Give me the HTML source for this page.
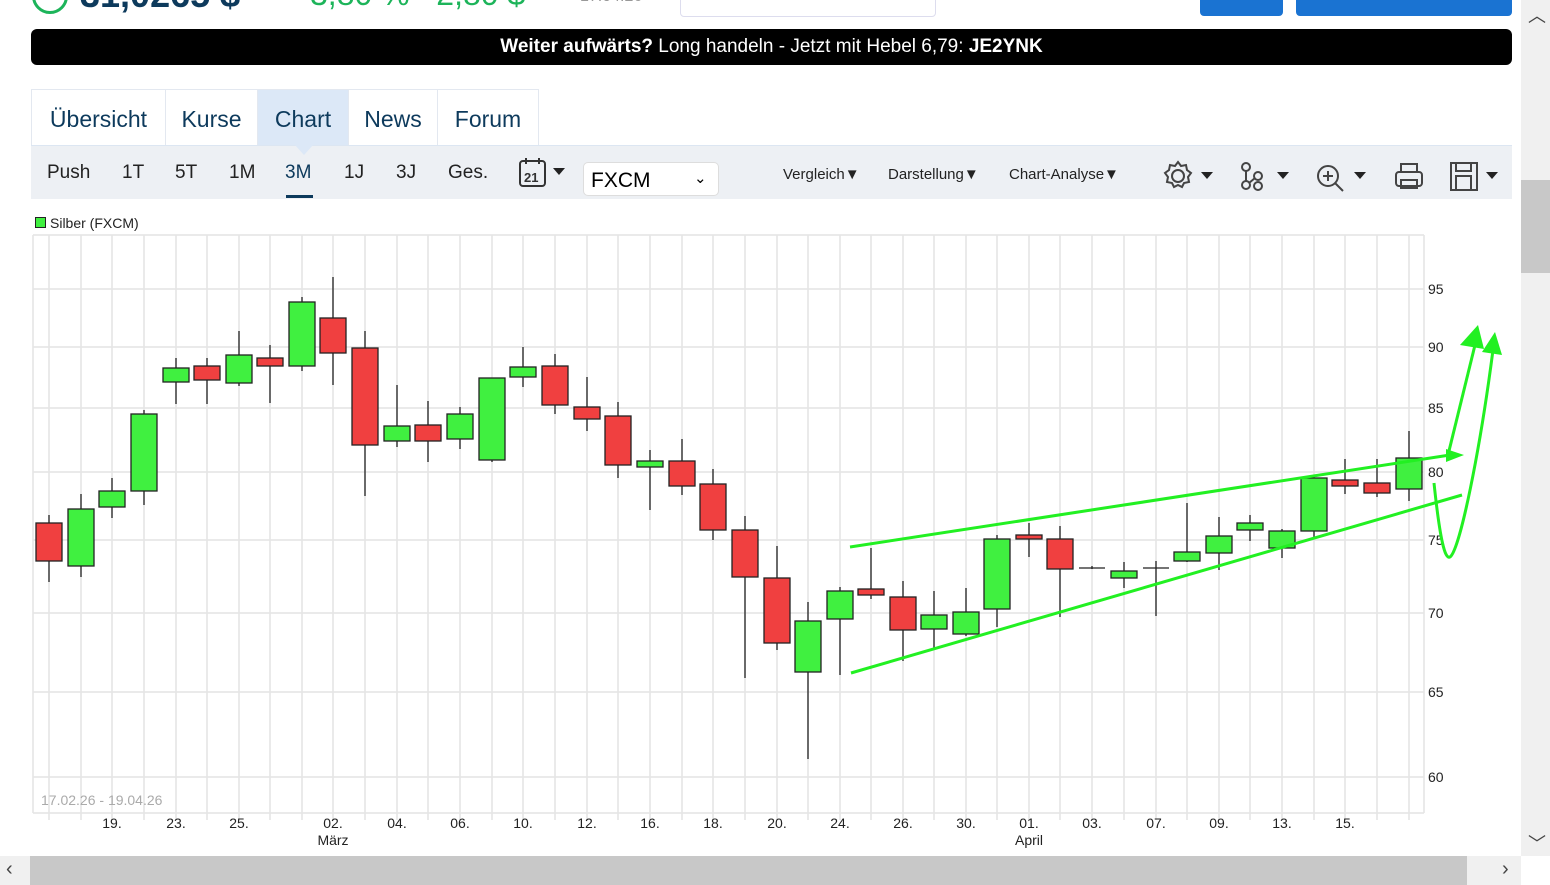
<!DOCTYPE html>
<html><head><meta charset="utf-8"><style>
body{margin:0;width:1550px;height:885px;overflow:hidden;background:#fff;font-family:"Liberation Sans",sans-serif;position:relative}
.a{position:absolute}
.tab{position:absolute;top:89px;height:56px;border:1px solid #e3e8f0;border-bottom:none;font-size:23px;color:#0d3a5c;line-height:58px;text-align:center;box-sizing:border-box}
.tb{position:absolute;top:162px;font-size:19px;color:#222}
.dd{position:absolute;top:166px;font-size:15px;color:#222}
</style></head><body>
<div class="a" style="left:32px;top:-22px;width:30px;height:30px;border:3px solid #1db45a;border-radius:50%"></div>
<div class="a" style="left:80px;top:-26px;font-size:36px;font-weight:bold;color:#0d3a5c">31,0265 $</div>
<div class="a" style="left:310px;top:-24px;font-size:32px;color:#1db45a">3,80 %&nbsp;&nbsp; 2,80 $</div>
<div class="a" style="left:580px;top:-12px;font-size:16px;color:#999">17.04.26</div>
<div class="a" style="left:680px;top:-5px;width:254px;height:20px;border:1px solid #dde;border-radius:4px"></div>
<div class="a" style="left:1200px;top:-5px;width:83px;height:21px;background:#1a73d2;border-radius:4px"></div>
<div class="a" style="left:1296px;top:-5px;width:216px;height:21px;background:#1a73d2;border-radius:4px"></div>
<div class="a" style="left:31px;top:29px;width:1481px;height:36px;background:#000;border-radius:6px;color:#fff;font-size:19px;line-height:36px;text-align:center"><b>Weiter aufwärts?</b> Long handeln - Jetzt mit Hebel 6,79: <b>JE2YNK</b></div>
<div class="tab" style="left:31px;width:135px">Übersicht</div>
<div class="tab" style="left:165px;width:93px">Kurse</div>
<div class="tab" style="left:257px;width:92px;background:#dce8f7">Chart</div>
<div class="tab" style="left:348px;width:90px">News</div>
<div class="tab" style="left:437px;width:102px">Forum</div>
<div class="a" style="left:31px;top:145px;width:1481px;height:53px;background:#edf0f4;border-top:1px solid #dce6f2"></div>
<div class="a" style="left:295px;top:145px;width:0;height:0;border-left:9px solid transparent;border-right:9px solid transparent;border-top:10px solid #dce8f7"></div>
<div class="tb" style="left:47px">Push</div><div class="tb" style="left:122px">1T</div><div class="tb" style="left:175px">5T</div><div class="tb" style="left:229px">1M</div><div class="tb" style="left:285px;color:#0d3a5c">3M</div><div class="tb" style="left:344px">1J</div><div class="tb" style="left:396px">3J</div><div class="tb" style="left:448px">Ges.</div>
<div class="a" style="left:286px;top:195px;width:27px;height:3px;background:#0d3a5c"></div>
<svg class="a" style="left:517px;top:157px" width="54" height="32"><rect x="3" y="4" width="25" height="25" rx="3" fill="none" stroke="#333" stroke-width="2"/><line x1="9" y1="1" x2="9" y2="7" stroke="#333" stroke-width="2"/><line x1="22" y1="1" x2="22" y2="7" stroke="#333" stroke-width="2"/><text x="7" y="25" font-size="13" font-weight="bold" fill="#333" font-family="Liberation Sans">21</text><path d="M36 11h12l-6 7z" fill="#222"/></svg>
<div class="a" style="left:583px;top:162px;width:136px;height:34px;background:#fff;border:1px solid #ddd;border-radius:5px;box-sizing:border-box;font-size:21px;line-height:36px;padding-left:7px">FXCM<span style="position:absolute;left:110px;top:-2px;font-size:15px">⌄</span></div>
<div class="dd" style="left:783px">Vergleich▼</div><div class="dd" style="left:888px">Darstellung▼</div><div class="dd" style="left:1009px">Chart-Analyse▼</div>
<svg class="a" style="left:1160px;top:158px" width="352" height="36" fill="none" stroke="#444" stroke-width="2">
<circle cx="18" cy="18" r="6"/><path d="M18 4l3 4 5-1 1 5 4 3-3 4 1 5-5 1-2 4-4-2-4 2-2-4-5-1 1-5-3-4 4-3 1-5 5 1z"/>
<path d="M41 14h12l-6 7z" fill="#222" stroke="none"/>
<circle cx="86" cy="9" r="4"/><circle cx="98" cy="18" r="4"/><circle cx="86" cy="27" r="4"/><circle cx="98" cy="28" r="4"/><path d="M86 13v10M89 25l6-5"/>
<path d="M117 14h12l-6 7z" fill="#222" stroke="none"/>
<circle cx="168" cy="18" r="10"/><path d="M175 25l8 8M163 18h10M168 13v10"/>
<path d="M194 14h12l-6 7z" fill="#222" stroke="none"/>
<rect x="236" y="14" width="26" height="14" rx="3"/><rect x="241" y="6" width="16" height="8"/><rect x="241" y="22" width="16" height="8"/>
<rect x="291" y="5" width="26" height="27"/><rect x="296" y="5" width="15" height="8"/><rect x="296" y="18" width="15" height="14"/>
<path d="M326 14h12l-6 7z" fill="#222" stroke="none"/>
</svg>
<div class="a" style="left:35px;top:217px;width:9px;height:9px;background:#40f040;border:1px solid #222"></div>
<div class="a" style="left:50px;top:215px;font-size:14px;color:#222">Silber (FXCM)</div>
<svg class="a" style="left:0;top:0" width="1520" height="856" font-family="Liberation Sans" font-size="14">
<g stroke="#e4e4e4" stroke-width="1.5">
<line x1="33" y1="235" x2="1424" y2="235"/><line x1="33" y1="289" x2="1424" y2="289"/><line x1="33" y1="347" x2="1424" y2="347"/><line x1="33" y1="408" x2="1424" y2="408"/><line x1="33" y1="472" x2="1424" y2="472"/><line x1="33" y1="540" x2="1424" y2="540"/><line x1="33" y1="613" x2="1424" y2="613"/><line x1="33" y1="692" x2="1424" y2="692"/><line x1="33" y1="777" x2="1424" y2="777"/><line x1="33" y1="813" x2="1424" y2="813"/>
<line x1="33" y1="235" x2="33" y2="813"/><line x1="1424" y1="235" x2="1424" y2="813"/>
<path d="M49 235V820M81 235V820M112 235V820M144 235V820M176 235V820M207 235V820M239 235V820M270 235V820M302 235V820M333 235V820M365 235V820M397 235V820M428 235V820M460 235V820M492 235V820M523 235V820M555 235V820M587 235V820M618 235V820M650 235V820M682 235V820M713 235V820M745 235V820M777 235V820M808 235V820M840 235V820M871 235V820M903 235V820M934 235V820M966 235V820M997 235V820M1029 235V820M1060 235V820M1092 235V820M1124 235V820M1156 235V820M1187 235V820M1219 235V820M1250 235V820M1282 235V820M1314 235V820M1345 235V820M1377 235V820M1409 235V820"/>
</g>
<g fill="#222"><text x="1428" y="294">95</text><text x="1428" y="352">90</text><text x="1428" y="413">85</text><text x="1428" y="477">80</text><text x="1428" y="545">75</text><text x="1428" y="618">70</text><text x="1428" y="697">65</text><text x="1428" y="782">60</text></g>
<text x="41" y="805" fill="#aaa">17.02.26 - 19.04.26</text>
<g fill="#222" text-anchor="middle"><text x="112" y="828">19.</text><text x="176" y="828">23.</text><text x="239" y="828">25.</text><text x="333" y="828">02.</text><text x="333" y="845">März</text><text x="397" y="828">04.</text><text x="460" y="828">06.</text><text x="523" y="828">10.</text><text x="587" y="828">12.</text><text x="650" y="828">16.</text><text x="713" y="828">18.</text><text x="777" y="828">20.</text><text x="840" y="828">24.</text><text x="903" y="828">26.</text><text x="966" y="828">30.</text><text x="1029" y="828">01.</text><text x="1029" y="845">April</text><text x="1092" y="828">03.</text><text x="1156" y="828">07.</text><text x="1219" y="828">09.</text><text x="1282" y="828">13.</text><text x="1345" y="828">15.</text></g>
<g stroke="#222" stroke-width="1.3">
<path d="M49 515V582M81 494V577M112 478V518M144 410V505M176 358V404M207 358V404M239 331V386M270 345V403M302 297V371M333 277V385M365 331V496M397 385V447M428 401V462M460 407V449M492 378V462M523 347V387M555 354V414M587 377V431M618 402V478M650 450V510M682 439V495M713 469V540M745 516V678M777 546V650M808 602V759M840 587V675M871 548V599M903 581V661M934 591V650M966 588V636M997 535V627M1029 523V557M1060 526V617M1092 566V569M1124 562V588M1156 561V616M1187 503V562M1219 517V570M1250 515V541M1282 529V558M1314 475V537M1345 459V494M1377 459V497M1409 431V501M1079 568H1105M1143 568H1169"/>
</g>
<g stroke="#222" stroke-width="1.3" fill="#40f040">
<rect x="68" y="509" width="26" height="57"/><rect x="99" y="491" width="26" height="16"/><rect x="131" y="414" width="26" height="77"/><rect x="163" y="368" width="26" height="14"/><rect x="226" y="355" width="26" height="28"/><rect x="289" y="302" width="26" height="64"/><rect x="384" y="426" width="26" height="15"/><rect x="447" y="414" width="26" height="25"/><rect x="479" y="378" width="26" height="82"/><rect x="510" y="367" width="26" height="10"/><rect x="637" y="461" width="26" height="6"/><rect x="795" y="621" width="26" height="51"/><rect x="827" y="591" width="26" height="28"/><rect x="921" y="615" width="26" height="14"/><rect x="953" y="612" width="26" height="22"/><rect x="984" y="539" width="26" height="70"/><rect x="1111" y="571" width="26" height="7"/><rect x="1174" y="552" width="26" height="9"/><rect x="1206" y="536" width="26" height="17"/><rect x="1237" y="523" width="26" height="7"/><rect x="1269" y="531" width="26" height="17"/><rect x="1301" y="478" width="26" height="53"/><rect x="1396" y="458" width="26" height="31"/>
</g>
<g stroke="#222" stroke-width="1.3" fill="#f04040">
<rect x="36" y="523" width="26" height="38"/><rect x="194" y="366" width="26" height="14"/><rect x="257" y="358" width="26" height="8"/><rect x="320" y="318" width="26" height="35"/><rect x="352" y="348" width="26" height="97"/><rect x="415" y="425" width="26" height="16"/><rect x="542" y="366" width="26" height="39"/><rect x="574" y="407" width="26" height="12"/><rect x="605" y="416" width="26" height="49"/><rect x="669" y="461" width="26" height="25"/><rect x="700" y="484" width="26" height="46"/><rect x="732" y="530" width="26" height="47"/><rect x="764" y="578" width="26" height="65"/><rect x="858" y="589" width="26" height="6"/><rect x="890" y="597" width="26" height="33"/><rect x="1016" y="535" width="26" height="4"/><rect x="1047" y="539" width="26" height="30"/><rect x="1332" y="480" width="26" height="6"/><rect x="1364" y="483" width="26" height="10"/>
</g>
<g stroke="#22f022" stroke-width="3" fill="none">
<line x1="850" y1="547" x2="1450" y2="455"/><line x1="851" y1="673" x2="1462" y2="495"/>
<path d="M1434 483C1440 540 1445 560 1450 557C1460 550 1480 450 1493 350"/>
<path d="M1448 455L1475 345"/>
</g>
<g fill="#22f022"><path d="M1446 449L1464 455L1446 462z"/><path d="M1460 345L1478 325L1484 349z"/><path d="M1482 352L1495 332L1502 355z"/></g>
</svg>
<div class="a" style="left:1521px;top:0;width:29px;height:856px;background:#f0f0f0"></div>
<div class="a" style="left:1521px;top:180px;width:29px;height:93px;background:#c8c8c8"></div>
<div class="a" style="left:1528px;top:2px;font-size:18px;color:#444">︿</div>
<div class="a" style="left:1528px;top:830px;font-size:18px;color:#444">﹀</div>
<div class="a" style="left:0;top:856px;width:1521px;height:29px;background:#f0f0f0"></div>
<div class="a" style="left:30px;top:856px;width:1437px;height:29px;background:#c8c8c8"></div>
<div class="a" style="left:6px;top:858px;font-size:20px;color:#444">‹</div>
<div class="a" style="left:1502px;top:858px;font-size:20px;color:#444">›</div>
</body></html>
